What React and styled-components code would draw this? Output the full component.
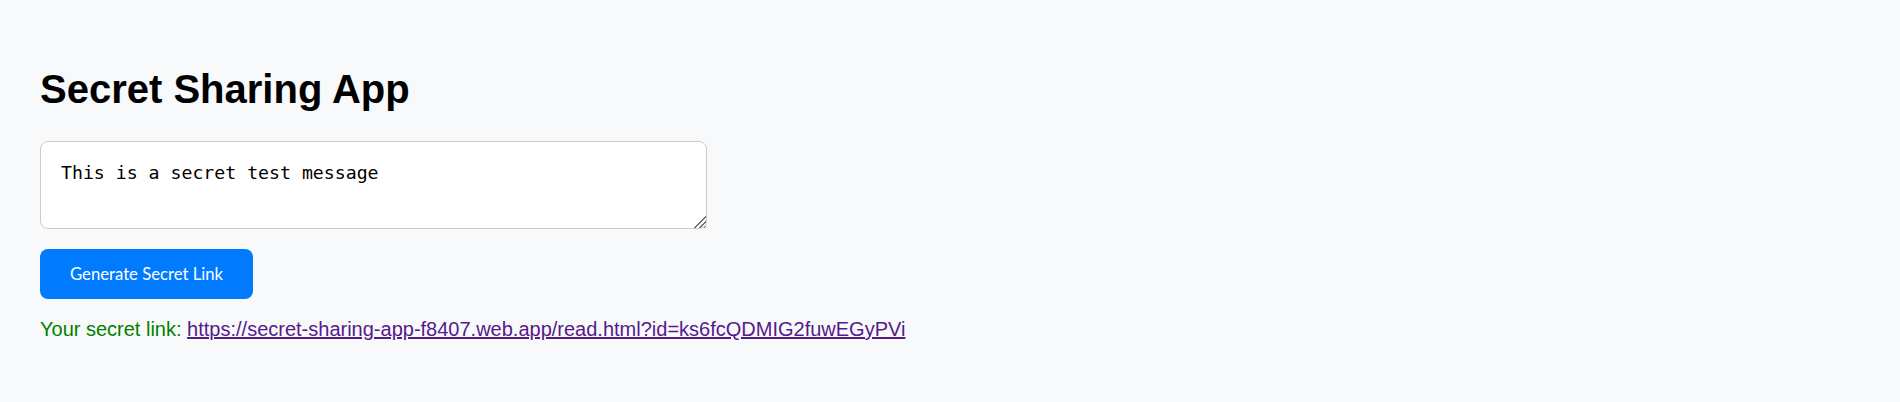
import React, { useState } from 'react'
import styled, { createGlobalStyle } from 'styled-components'

const GlobalStyle = createGlobalStyle`
  html, body {
    margin: 0;
    padding: 0;
    background: #f8f9fa;
    font-family: "Liberation Sans", Arial, sans-serif;
    font-size: 20px;
  }
`

const Page = styled.main`
  display: flex;
  flex-direction: column;
  align-items: flex-start;
  padding: 66px 40px 40px;
`

const Title = styled.h1`
  margin: 0 0 29px;
  font-size: 40px;
  font-weight: bold;
  line-height: 46px;
  color: #000;
`

const MessageInput = styled.textarea`
  box-sizing: border-box;
  width: 667px;
  height: 88px;
  padding: 20px;
  border: 1px solid #cccccc;
  border-radius: 8px;
  background: #fff;
  color: #000;
  font-family: "DejaVu Sans Mono", "Liberation Mono", monospace;
  font-size: 18.2px;
  line-height: 22px;
  outline: none;

  &::-webkit-resizer {
    background:
      linear-gradient(135deg, #fff 0 52%, transparent 52%),
      repeating-linear-gradient(135deg, transparent 0 2.2px, #6e6e6e 2.2px 3.4px);
  }
`

const GenerateButton = styled.button`
  margin-top: 20px;
  height: 50px;
  padding: 0 30px;
  border: none;
  border-radius: 8px;
  background: #007bff;
  color: #fff;
  font-family: Lato, "Open Sans", sans-serif;
  font-size: 16.7px;
  cursor: pointer;
`

const Result = styled.p`
  margin: 19px 0 0;
  color: green;
  font-size: 20px;
  line-height: 23px;

  a {
    color: #551a8b;
  }
`

const link = 'https://secret-sharing-app-f8407.web.app/read.html?id=ks6fcQDMIG2fuwEGyPVi'

export default function App() {
  const [message, setMessage] = useState('This is a secret test message')

  return (
    <>
      <GlobalStyle />
      <Page>
        <Title>Secret Sharing App</Title>
        <MessageInput value={message} onChange={e => setMessage(e.target.value)} />
        <GenerateButton>Generate Secret Link</GenerateButton>
        <Result>
          Your secret link: <a href={link}>{link}</a>
        </Result>
      </Page>
    </>
  )
}
